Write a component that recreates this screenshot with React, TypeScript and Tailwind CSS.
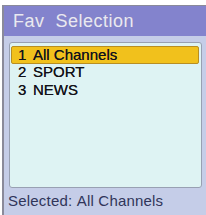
import React from "react";

export default function App() {
  const items = ["All Channels", "SPORT", "NEWS"];
  return (
    <div className="w-[206px] h-[215px] bg-white pt-[5px] pl-[2px] overflow-hidden" style={{ fontFamily: '"Liberation Sans", Arial, sans-serif' }}>
      <div className="h-[210px] border-l-2 border-t border-[#8a8a9a] bg-[#c5cde8] flex flex-col">
        <div className="h-[30px] shrink-0 bg-[#8383cd] flex items-center pl-[9px] text-[18px] text-[#e9e8f4] tracking-[0.5px] [text-shadow:0_0_1px_#8a8ab0]">
          Fav&nbsp;&nbsp;Selection
        </div>
        <div className="ml-[5px] mr-[4px] mt-[6px] h-[146px] shrink-0 rounded-[3px] border border-[#98a0b2] bg-[#def3f3] pt-[3px] pl-[1px] pr-[2px]">
          {items.map((t, i) => (
            <div key={t} className="h-[17.5px] flex items-center">
              <div
                className={
                  "h-[18px] w-full shrink-0 flex items-center pl-[6px] text-[15px] text-[#111118] rounded-[2px] [text-shadow:0_0_0.5px_#333] " +
                  (i === 0 ? "bg-[#f1c11c] border border-[#b88e22]" : "border border-transparent")
                }
              >
                <span className="w-[15px]">{i + 1}</span>
                <span>{t}</span>
              </div>
            </div>
          ))}
        </div>
        <div className="flex-1 flex items-center pl-[4px] text-[15px] tracking-[0.2px] text-[#30355a]">
          Selected:&nbsp;All&nbsp;Channels
        </div>
      </div>
    </div>
  );
}
